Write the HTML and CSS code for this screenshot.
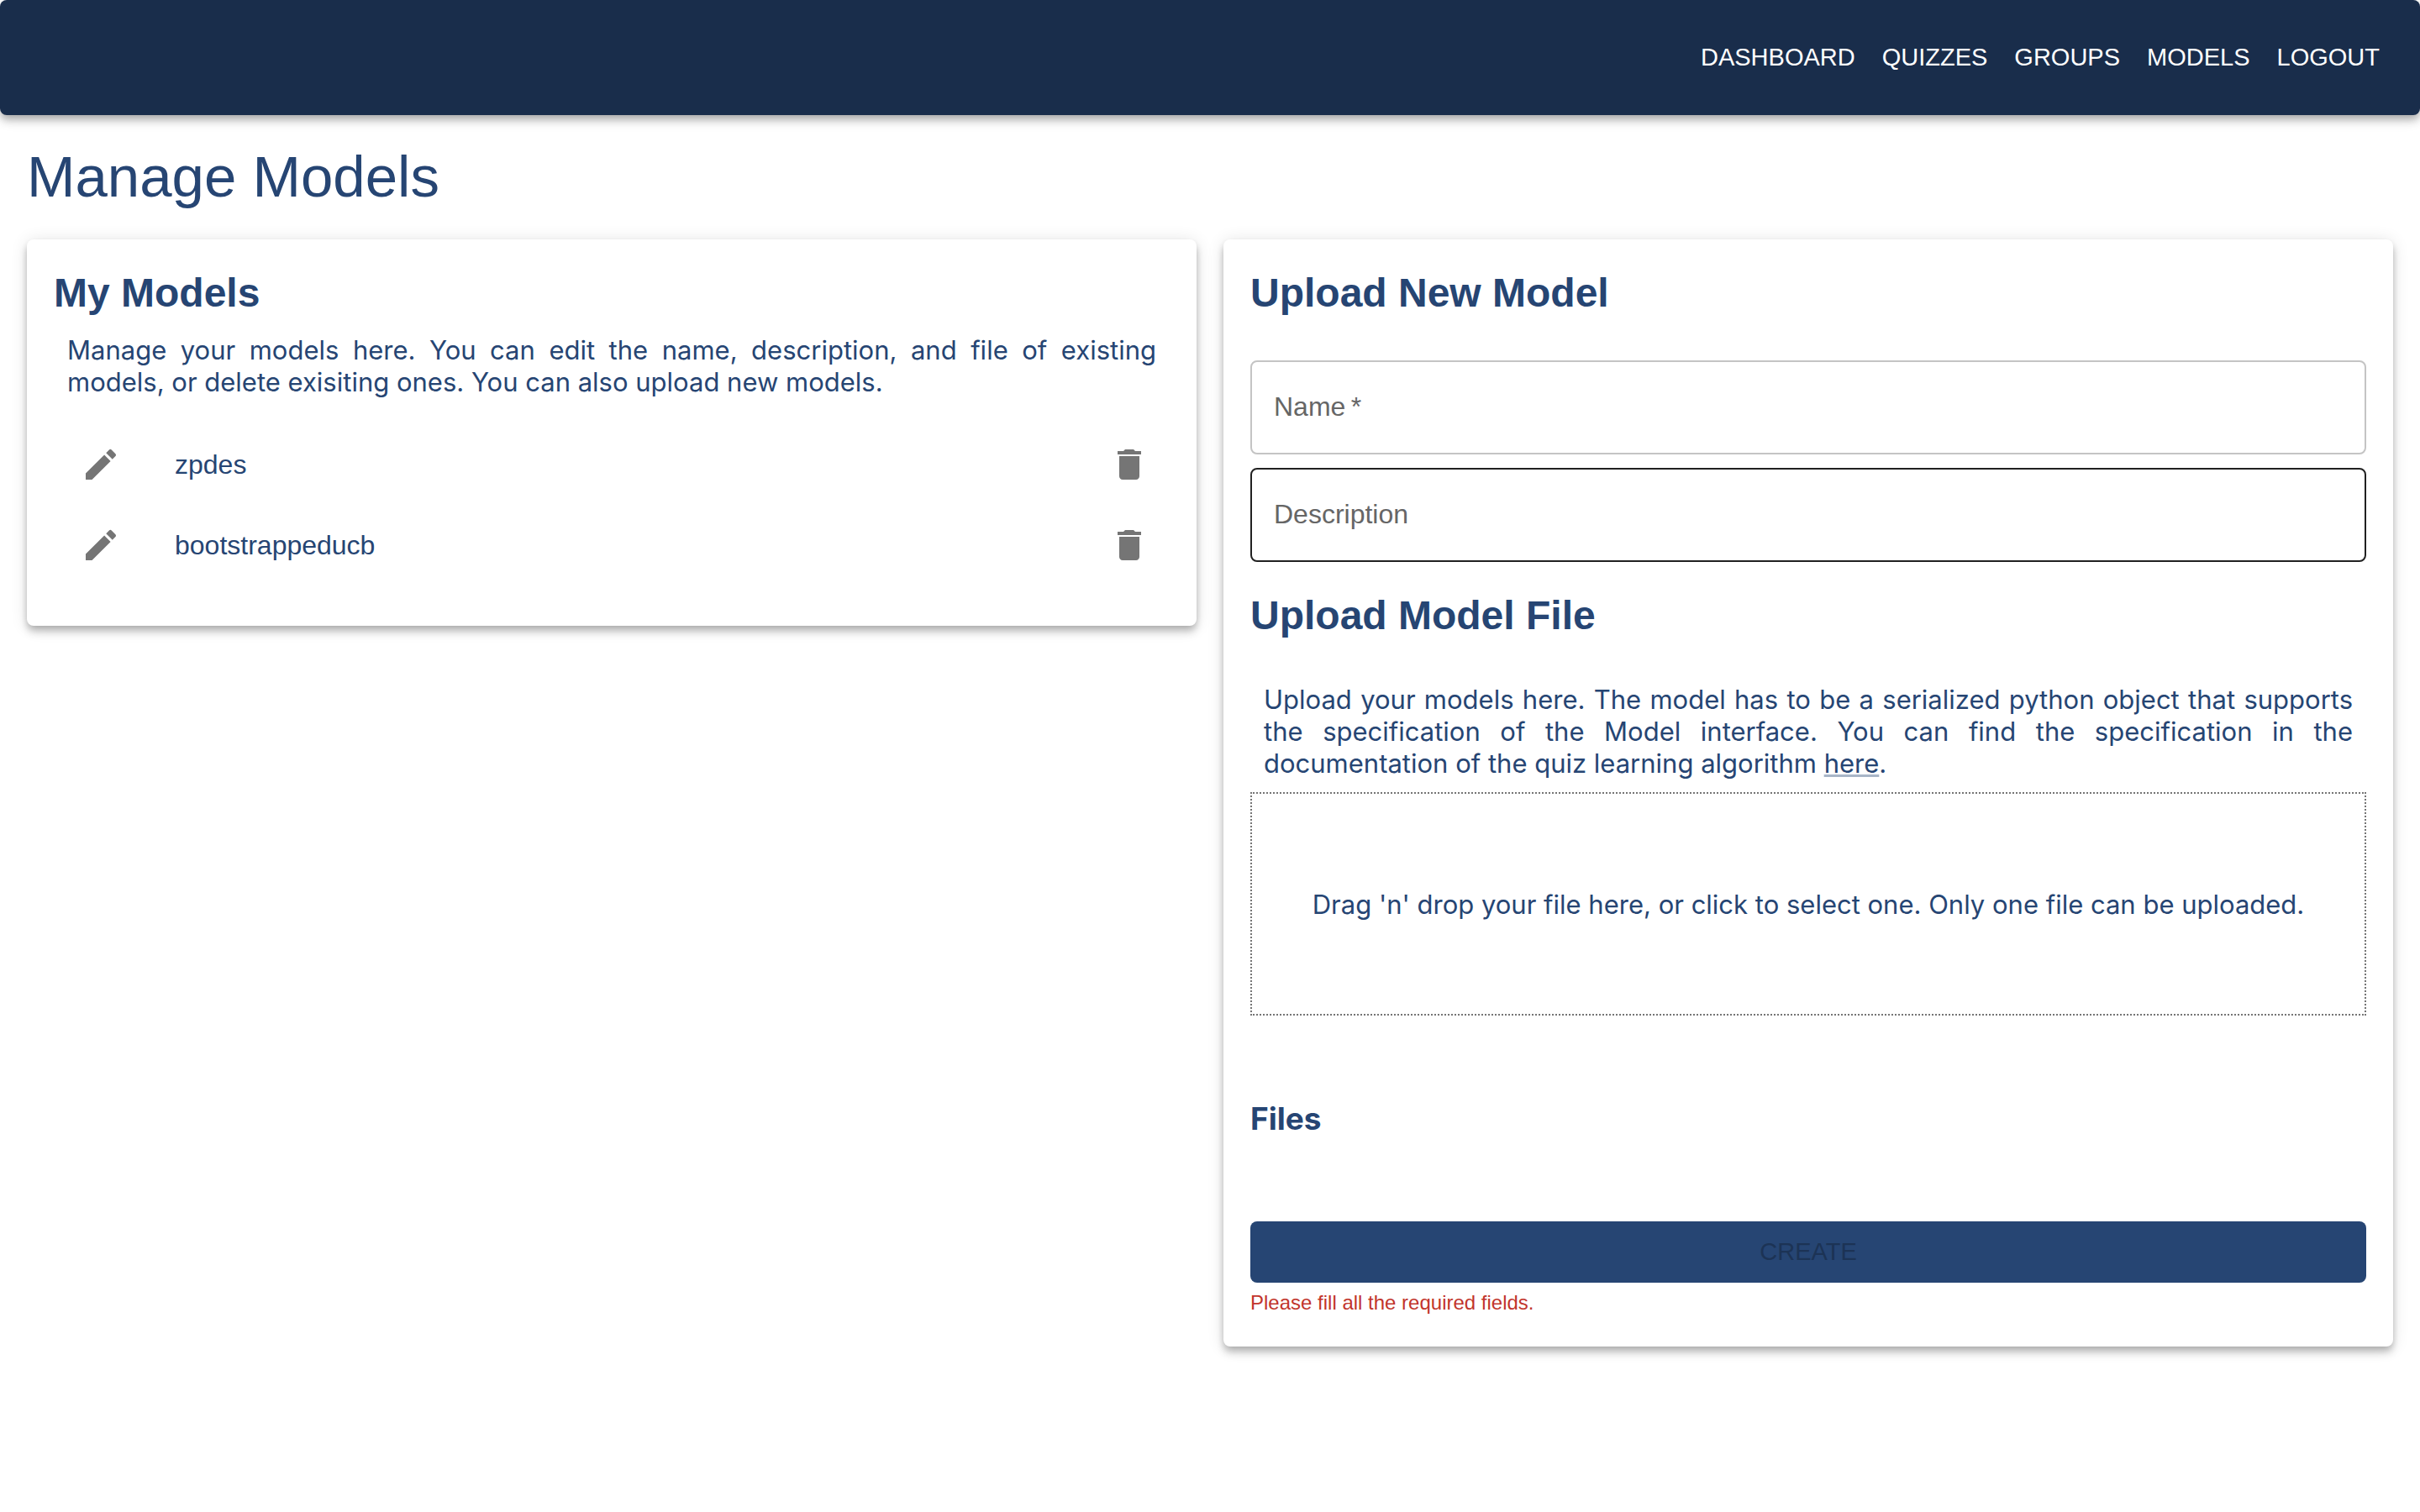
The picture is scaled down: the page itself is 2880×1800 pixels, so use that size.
FILE: index.html
```
<!DOCTYPE html>
<html lang="en">
<head>
<meta charset="utf-8">
<meta name="viewport" content="width=device-width, initial-scale=1">
<title>Manage Models</title>
<link rel="stylesheet" href="styles.css">
</head>
<body>
<svg class="sprite" aria-hidden="true">
  <symbol id="icon-edit" viewBox="0 0 24 24"><path d="M3 17.25V21h3.75L17.81 9.94l-3.75-3.75L3 17.25zM20.71 7.04c.39-.39.39-1.02 0-1.41l-2.34-2.34a.9959.9959 0 0 0-1.41 0l-1.83 1.83 3.75 3.75 1.83-1.83z"/></symbol>
  <symbol id="icon-delete" viewBox="0 0 24 24"><path d="M6 19c0 1.1.9 2 2 2h8c1.1 0 2-.9 2-2V7H6v12zM19 4h-3.500l-1-1h-5l-1 1H5v2h14V4z"/></symbol>
</svg>

<header class="topbar">
  <nav class="nav">
    <a class="nav-link" href="#dashboard">DASHBOARD</a>
    <a class="nav-link" href="#quizzes">QUIZZES</a>
    <a class="nav-link" href="#groups">GROUPS</a>
    <a class="nav-link" href="#models">MODELS</a>
    <a class="nav-link" href="#logout">LOGOUT</a>
  </nav>
</header>

<main class="page">
  <h1 class="page-title">Manage Models</h1>
  <div class="columns">
    <section class="card card-models">
      <h2 class="heading">My Models</h2>
      <p class="text">Manage your models here. You can edit the name, description, and file of existing models, or delete exisiting ones. You can also upload new models.</p>
      <ul class="models">
        <li class="model">
          <button class="icon-button" type="button" aria-label="Edit zpdes"><svg class="icon"><use href="#icon-edit"/></svg></button>
          <span class="model-name">zpdes</span>
          <button class="icon-button" type="button" aria-label="Delete zpdes"><svg class="icon"><use href="#icon-delete"/></svg></button>
        </li>
        <li class="model">
          <button class="icon-button" type="button" aria-label="Edit bootstrappeducb"><svg class="icon"><use href="#icon-edit"/></svg></button>
          <span class="model-name">bootstrappeducb</span>
          <button class="icon-button" type="button" aria-label="Delete bootstrappeducb"><svg class="icon"><use href="#icon-delete"/></svg></button>
        </li>
      </ul>
    </section>

    <form class="card card-upload">
      <h2 class="heading">Upload New Model</h2>
      <div class="fields">
        <div class="field">
          <input class="field-input" id="name" type="text" required>
          <label class="field-label" for="name">Name&thinsp;*</label>
        </div>
        <div class="field">
          <input class="field-input field-input-active" id="description" type="text">
          <label class="field-label" for="description">Description</label>
        </div>
      </div>
      <h2 class="heading">Upload Model File</h2>
      <p class="text text-upload">Upload your models here. The model has to be a serialized python object that supports the specification of the Model interface. You can find the specification in the documentation of the quiz learning algorithm <a class="text-link" href="#docs">here</a>.</p>
      <label class="dropzone" for="file">Drag 'n' drop your file here, or click to select one. Only one file can be uploaded.</label>
      <input class="file-input" id="file" type="file">
      <h3 class="subheading">Files</h3>
      <button class="submit" type="submit" disabled>CREATE</button>
      <p class="error">Please fill all the required fields.</p>
    </form>
  </div>
</main>
</body>
</html>
```
FILE: styles.css
```
:root {
  --navy: #192d4b;
  --blue: #264573;
  --shadow: 0 4px 8px -2px rgba(0, 0, 0, .2), 0 8px 10px 0 rgba(0, 0, 0, .14), 0 2px 20px 0 rgba(0, 0, 0, .12);
  --sans: "Liberation Sans", Helvetica, Arial, sans-serif;
  --body: Inter, "Liberation Sans", sans-serif;
}

* {
  box-sizing: border-box;
}

body {
  margin: 0;
  background: #fff;
  color: var(--blue);
  font: 32px/48px var(--sans);
}

h1, h2, h3, p, ul {
  margin: 0;
  padding: 0;
}

.sprite {
  display: none;
}

.topbar {
  padding: 44px 48px;
  border-radius: 8px;
  background: var(--navy);
  box-shadow: var(--shadow);
}

.nav {
  display: flex;
  justify-content: flex-end;
  gap: 32px;
}

.nav-link {
  color: #fff;
  font-size: 29px;
  line-height: 49px;
  text-decoration: none;
}

.page {
  padding: 32px;
}

.page-title {
  font-size: 69px;
  font-weight: 400;
  line-height: 84px;
}

.columns {
  display: grid;
  grid-template-columns: 1fr 1fr;
  align-items: start;
  gap: 32px;
  margin-top: 32px;
}

.card {
  padding: 32px;
  border-radius: 8px;
  background: #fff;
  box-shadow: var(--shadow);
}

.card-models {
  padding-bottom: 48px;
}

.heading {
  font-size: 48px;
  font-weight: 700;
  line-height: 64px;
}

.text {
  margin: 17px 16px 31px;
  font-family: var(--body);
  font-size: 31px;
  line-height: 38px;
  text-align: justify;
}

.text-upload {
  margin: 49px 16px 15px;
}

.text-link {
  color: inherit;
  text-decoration-color: rgba(38, 69, 115, .4);
  text-decoration-thickness: 3px;
}

.models {
  list-style: none;
}

.model {
  display: flex;
  align-items: center;
  height: 96px;
  padding: 0 8px 0 16px;
}

.model-name {
  flex: 1;
  padding-left: 48px;
}

.icon-button {
  display: flex;
  padding: 16px;
  border: 0;
  background: none;
  color: #757575;
  cursor: pointer;
}

.icon {
  width: 48px;
  height: 48px;
  fill: currentColor;
}

.fields {
  display: grid;
  gap: 16px;
  margin: 48px 0 32px;
}

.field {
  display: grid;
  align-items: center;
}

.field-input,
.field-label {
  grid-area: 1 / 1;
}

.field-input {
  width: 100%;
  height: 112px;
  padding: 0 28px;
  border: 2px solid #c4c4c4;
  border-radius: 8px;
  background: none;
  font: inherit;
}

.field-input-active {
  border-color: #212121;
}

.field-label {
  padding: 0 28px 2px;
  color: #666;
  pointer-events: none;
}

.dropzone {
  display: flex;
  align-items: center;
  justify-content: center;
  min-height: 266px;
  padding: 34px 32px 32px;
  border: 2px dotted #757575;
  font-family: var(--body);
  font-size: 31px;
  line-height: 38px;
}

.file-input {
  display: none;
}

.subheading {
  margin: 100px 0;
  font-family: var(--body);
  font-size: 37px;
  font-weight: 700;
  line-height: 45px;
}

.submit {
  display: block;
  width: 100%;
  padding: 12px 32px;
  border: 0;
  border-radius: 8px;
  background: var(--blue);
  color: #1c3355;
  font: 29px/49px var(--sans);
}

.error {
  margin-top: 4px;
  color: #c2352c;
  font-size: 24px;
  line-height: 40px;
}
```
